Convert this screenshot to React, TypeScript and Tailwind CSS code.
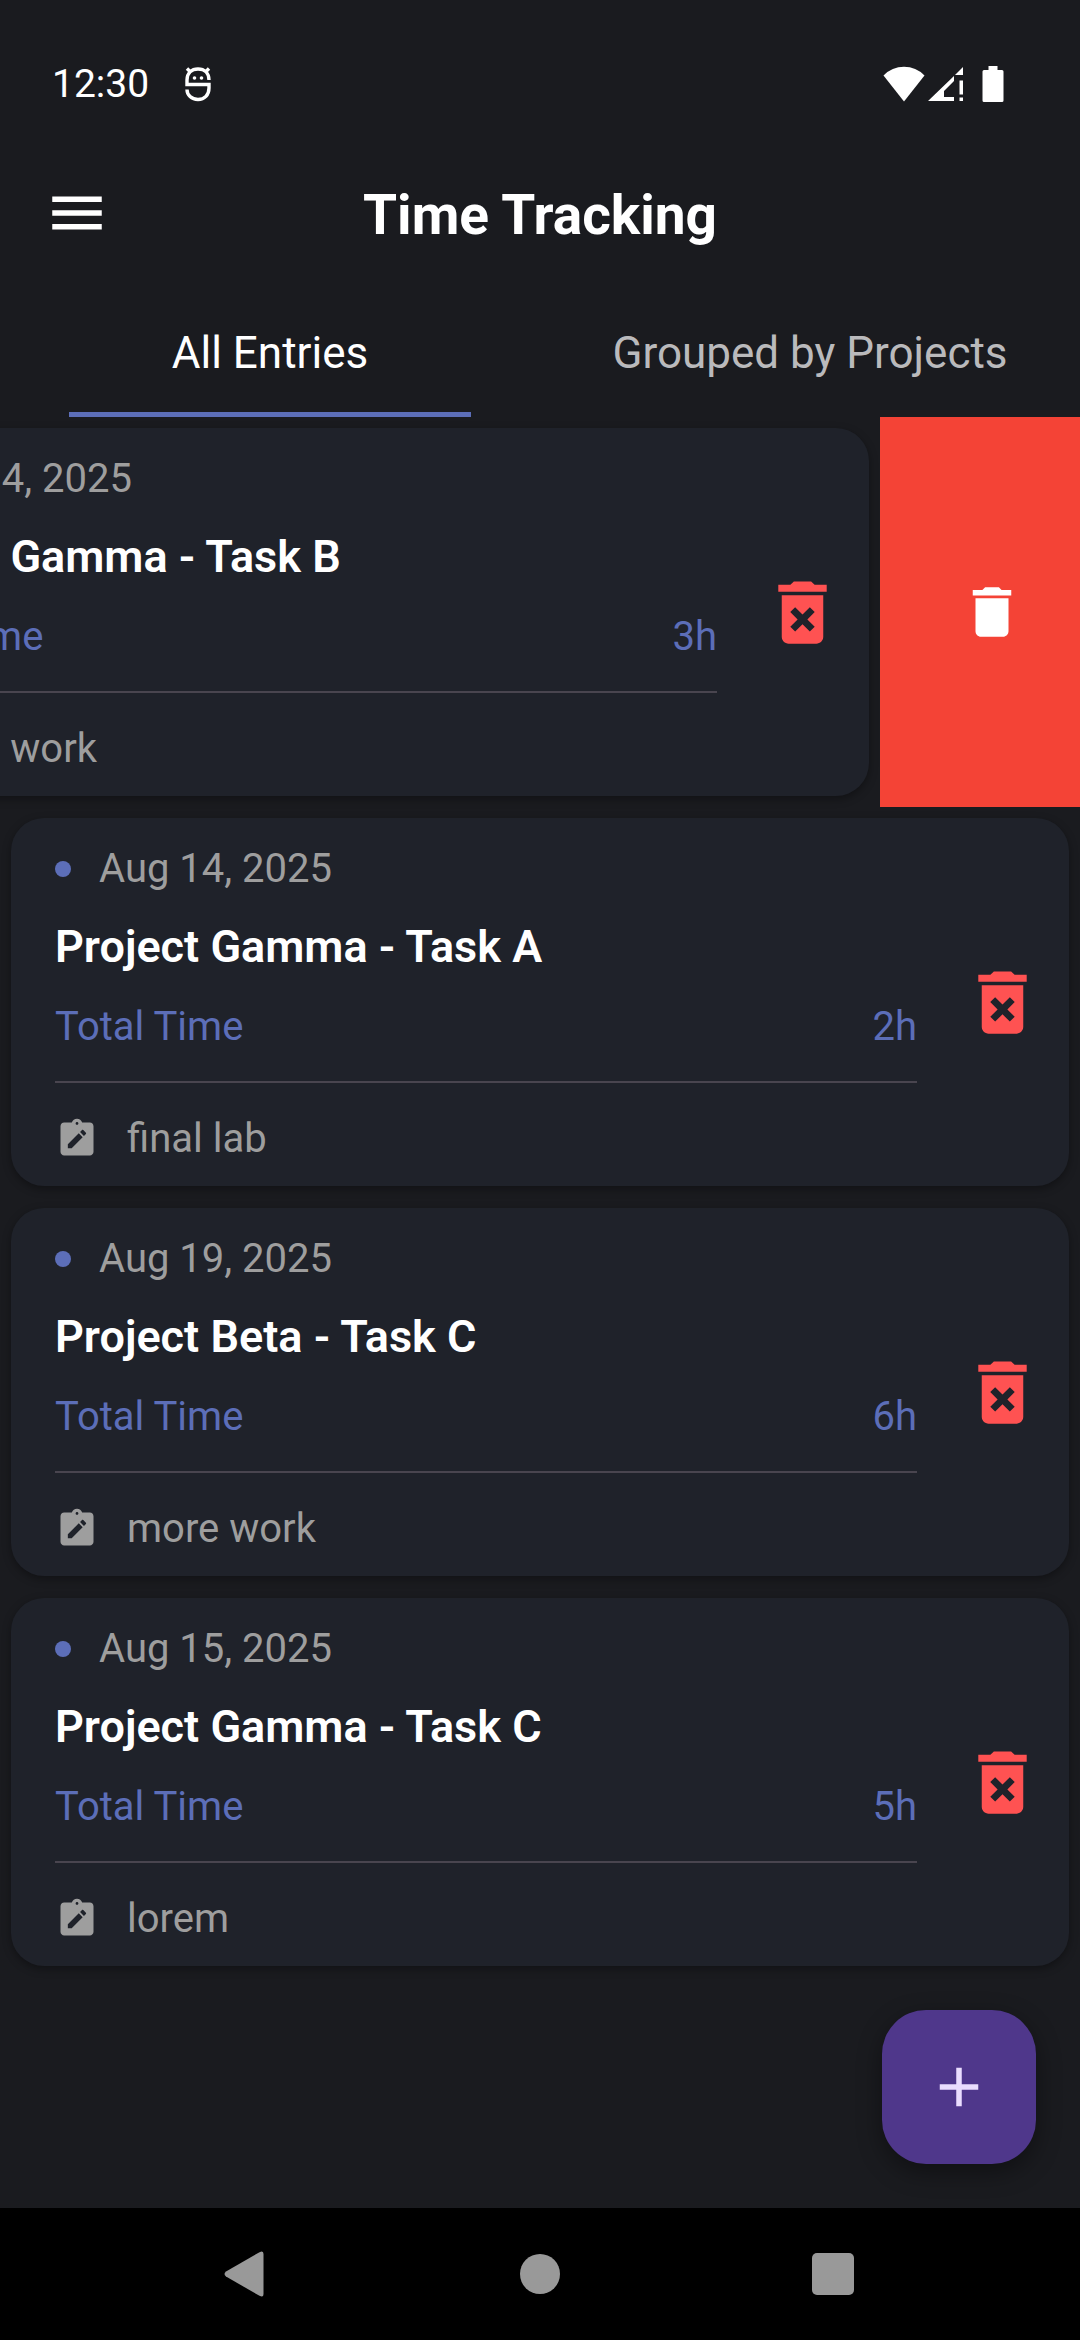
import { MdAdd, MdDelete, MdDeleteForever, MdMenu } from "react-icons/md";

type Entry = { date: string; title: string; hours: string; note: string; swiped?: boolean };

const entries: Entry[] = [
  { date: "Aug 14, 2025", title: "Project Gamma - Task B", hours: "3h", note: "new work", swiped: true },
  { date: "Aug 14, 2025", title: "Project Gamma - Task A", hours: "2h", note: "final lab" },
  { date: "Aug 19, 2025", title: "Project Beta - Task C", hours: "6h", note: "more work" },
  { date: "Aug 15, 2025", title: "Project Gamma - Task C", hours: "5h", note: "lorem" },
];

function NoteIcon() {
  return (
    <svg viewBox="0 0 24 24" className="size-11 shrink-0" fill="currentColor" fillRule="evenodd" aria-hidden="true">
      <path d="M19 3h-4.18C14.4 1.84 13.3 1 12 1s-2.4.84-2.82 2H5c-1.1 0-2 .9-2 2v14c0 1.1.9 2 2 2h14c1.1 0 2-.9 2-2V5c0-1.1-.9-2-2-2zm-7-.25c.41 0 .75.34.75.75s-.34.75-.75.75-.75-.34-.75-.75.34-.75.75-.75zM9.1 17H7v-2.14l5.96-5.96 2.12 2.12L9.1 17zm7.75-7.73l-1.06 1.06-2.12-2.12 1.06-1.06c.2-.2.51-.2.71 0l1.41 1.41c.2.2.2.51 0 .71z" />
    </svg>
  );
}

function MascotIcon() {
  return (
    <svg viewBox="0 0 26 36" className="h-9 w-[26px]" fill="none" stroke="currentColor" strokeWidth="3.4" aria-hidden="true">
      <path d="M24 14C24 7 19.500 3 13 3S2 7 2 14v4.500h22V22c0 7-4.500 11.500-11 11.500S2 29 2 23.500" />
      <path d="M2 2.500l4 4M24 2.500l-4 4" />
      <circle cx="9.500" cy="12" r="1.800" fill="currentColor" stroke="none" />
      <circle cx="16.500" cy="12" r="1.800" fill="currentColor" stroke="none" />
    </svg>
  );
}

function StatusBar() {
  return (
    <div className="flex h-[136px] items-center pt-8 pr-[76px] pl-[52px]">
      <span className="text-[39px] leading-[46px]">12:30</span>
      <span className="ml-9">
        <MascotIcon />
      </span>
      <div className="ml-auto flex items-center">
        <svg viewBox="0 0 42 36" className="h-9 w-[42px]" fill="currentColor" aria-hidden="true">
          <path d="M21 35.500L.5 9.500Q9 .8 21 .8T41.500 9.500z" />
        </svg>
        <svg viewBox="0 0 36 36" className="ml-[3px] size-9" fill="currentColor" fillRule="evenodd" aria-hidden="true">
          <path d="M35 1v8h-8zM26 10v5L16 25v6h10v4H0zM31.500 14.500H35v14h-3.500zM31.500 31.500H35V35h-3.500z" />
        </svg>
        <svg viewBox="0 0 22 36" className="ml-[18px] h-9 w-[22px]" fill="currentColor" aria-hidden="true">
          <path d="M6.500 0h9v4H20q1.500 0 1.500 1.500v29Q21.500 36 20 36H2Q.5 36 .5 34.500v-29Q.5 4 2 4h4.500z" />
        </svg>
      </div>
    </div>
  );
}

function EntryCard({ entry }: { entry: Entry }) {
  return (
    <article className="flex items-center rounded-[33px] bg-[#1F222A] pr-[25px] pl-11 shadow-[0_3px_8px_rgba(0,0,0,0.35)]">
      <div className="min-w-0 flex-1 pt-[25px] pb-[21px]">
        <div className="flex items-center gap-7 text-[#9E9E9E]">
          <span className="size-4 rounded-full bg-[#5C6EB8]" />
          <time className="text-[40px] leading-[52px]">{entry.date}</time>
        </div>
        <h2 className="mt-[22px] text-[45px] leading-[60px] font-semibold">{entry.title}</h2>
        <div className="mt-6 flex justify-between text-[40px] leading-[52px] text-[#5C6EB8]">
          <span>Total Time</span>
          <span>{entry.hours}</span>
        </div>
        <hr className="mt-7 border-0 border-t-2 border-[#49454F]" />
        <div className="mt-[30px] flex items-center gap-7 text-[#9E9E9E]">
          <NoteIcon />
          <span className="text-[40px] leading-[52px]">{entry.note}</span>
        </div>
      </div>
      <button type="button" aria-label={`Delete ${entry.title}`} className="ml-11 text-[#FF5252]">
        <MdDeleteForever className="size-[83px]" />
      </button>
    </article>
  );
}

export default function App() {
  return (
    <div className="flex min-h-screen flex-col overflow-x-hidden bg-[#1A1B1F] font-['Roboto',sans-serif] text-white">
      <StatusBar />
      <header className="grid h-[154px] grid-cols-[1fr_auto_1fr] items-center px-11">
        <button type="button" aria-label="Open menu" className="justify-self-start">
          <MdMenu className="size-[66px]" />
        </button>
        <h1 className="pt-1 text-[55px] leading-[66px] font-bold">Time Tracking</h1>
      </header>
      <div role="tablist" className="grid h-[127px] grid-cols-2 text-[44px] leading-[52px]">
        <button type="button" role="tab" aria-selected="true" className="mx-[69px] border-b-[5px] border-[#5C6EB8] pt-1">
          All Entries
        </button>
        <button type="button" role="tab" aria-selected="false" className="border-b-[5px] border-transparent pt-1 text-[#BABABC]">
          Grouped by Projects
        </button>
      </div>
      <main className="flex-1">
        <ul>
          {entries.map((entry) =>
            entry.swiped ? (
              <li key={entry.title} className="flex justify-end">
                <div className="w-full shrink-0 p-[11px]">
                  <EntryCard entry={entry} />
                </div>
                <button type="button" aria-label="Delete entry" className="flex w-[200px] shrink-0 items-center justify-center bg-[#F44336] pl-6">
                  <MdDelete className="size-[66px]" />
                </button>
              </li>
            ) : (
              <li key={entry.title} className="p-[11px]">
                <EntryCard entry={entry} />
              </li>
            ),
          )}
        </ul>
      </main>
      <div className="flex justify-end pr-11 pb-11">
        <button type="button" aria-label="Add entry" className="flex size-[154px] items-center justify-center rounded-[44px] bg-[#4F378B] text-[#EADDFF] shadow-[0_8px_24px_rgba(0,0,0,0.4)]">
          <MdAdd className="size-[66px]" />
        </button>
      </div>
      <nav className="grid h-[132px] grid-cols-[1fr_auto_1fr] items-center bg-black text-[#999999]">
        <button type="button" aria-label="Back" className="mr-[256px] justify-self-end">
          <svg viewBox="0 0 40 46" className="h-[46px] w-10" fill="currentColor" aria-hidden="true">
            <path d="M35.500 1.200Q39.500-1 39.500 3v40q0 4-4 1.800L2 25.500Q-1 23 2 20.500z" />
          </svg>
        </button>
        <button type="button" aria-label="Home" className="size-10 rounded-full bg-[#999999]" />
        <button type="button" aria-label="Recent apps" className="ml-[252px] size-[42px] justify-self-start rounded-[5px] bg-[#999999]" />
      </nav>
    </div>
  );
}
